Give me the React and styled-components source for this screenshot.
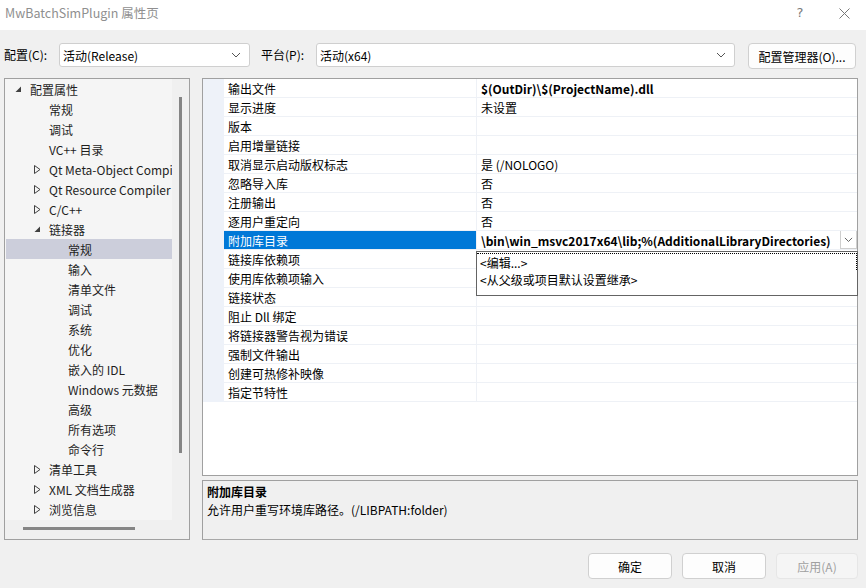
import styled, { createGlobalStyle } from 'styled-components';

const GlobalStyle = createGlobalStyle`
  html, body {
    margin: 0;
    padding: 0;
    background: #f0f0f0;
  }
  body {
    font-family: "Noto Sans CJK SC", "Noto Sans", sans-serif;
    font-size: 12px;
    color: #000;
  }
  * {
    box-sizing: border-box;
  }
`;

const Window = styled.div`
  width: 866px;
  height: 588px;
  display: flex;
  flex-direction: column;
  background: #f0f0f0;
  overflow: hidden;
`;

const TitleBar = styled.div`
  height: 30px;
  background: #fff;
  display: flex;
  align-items: flex-start;
  padding: 4px 0 0 5px;
  color: #8f8f8f;
  font-size: 12.5px;
  line-height: 18px;
`;

const TitleText = styled.div`
  flex: 1;
`;

const TitleButton = styled.div`
  width: 44px;
  height: 18px;
  display: flex;
  align-items: center;
  justify-content: center;
  color: #7a7a7a;
  font-family: "DejaVu Sans", sans-serif;
  font-size: 13px;
`;

const Toolbar = styled.div`
  display: flex;
  align-items: flex-start;
  padding: 13px 10px 0 4px;
  height: 39px;
`;

const Label = styled.div`
  height: 24px;
  line-height: 24px;
  width: ${(p) => p.$w}px;
  white-space: nowrap;
`;

const Combo = styled.div`
  width: ${(p) => p.$w}px;
  height: 24px;
  background: #fff;
  border: 1px solid #cfcfcf;
  border-radius: 3px;
  display: flex;
  align-items: center;
  padding: 0 8px 0 3px;
  margin-right: ${(p) => p.$mr}px;
`;

const ComboText = styled.div`
  flex: 1;
`;

const Button = styled.div`
  width: ${(p) => p.$w}px;
  height: 26px;
  background: ${(p) => (p.$disabled ? '#f5f5f5' : '#fdfdfd')};
  border: 1px solid ${(p) => (p.$disabled ? '#e6e6e6' : '#d0d0d0')};
  border-radius: 4px;
  display: flex;
  align-items: center;
  justify-content: center;
  color: ${(p) => (p.$disabled ? '#a0a0a0' : '#000')};
`;

const Main = styled.div`
  display: flex;
  gap: 12px;
  padding-left: 4px;
  margin-top: 9px;
  height: 462px;
`;

const TreePanel = styled.div`
  width: 186px;
  border: 1px solid #a0a0a0;
  display: grid;
  grid-template-columns: 167px 17px;
  grid-template-rows: 441px 1fr;
  background: #f0f0f0;
`;

const TreeList = styled.div`
  background: #f5f5f5;
  padding: 0 0 0 1px;
  overflow: hidden;
`;

const TreeRow = styled.div`
  height: 20px;
  display: flex;
  align-items: center;
  padding-left: ${(p) => 5 + p.$level * 19}px;
  background: ${(p) => (p.$selected ? '#cccedb' : 'transparent')};
  white-space: nowrap;
  color: #1e1e1e;
`;

const Arrow = styled.span`
  width: 19px;
  flex: none;
  display: flex;
  align-items: center;
`;

const VScroll = styled.div`
  display: flex;
  justify-content: center;
  padding: 18px 0 0 0;
`;

const VThumb = styled.div`
  width: 3px;
  height: 356px;
  background: #858585;
  margin-left: -1px;
`;

const HScroll = styled.div`
  padding: 7px 0 0 18px;
`;

const HThumb = styled.div`
  width: 112px;
  height: 3px;
  background: #858585;
`;

const Corner = styled.div``;

const RightColumn = styled.div`
  width: 656px;
  display: flex;
  flex-direction: column;
  gap: 4px;
`;

const Grid = styled.div`
  position: relative;
  height: 398px;
  border: 1px solid #a0a0a0;
  background: #fff;
  display: grid;
  grid-template-columns: 21px 252px 1fr;
  grid-auto-rows: 19px;
  align-content: start;
`;

const Gutter = styled.div`
  background: #eef2f9;
  border-bottom: 1px solid #eef2f9;
`;

const NameCell = styled.div`
  padding-left: 4px;
  display: flex;
  align-items: center;
  border-bottom: 1px solid #eef1f6;
  background: ${(p) => (p.$selected ? '#0078d7' : '#fff')};
  color: ${(p) => (p.$selected ? '#fff' : '#000')};
  white-space: nowrap;
`;

const ValueCell = styled.div`
  padding-left: 4px;
  display: flex;
  align-items: center;
  border-bottom: 1px solid #eef1f6;
  border-left: 1px solid #eef1f6;
  font-weight: ${(p) => (p.$bold ? 700 : 400)};
  white-space: nowrap;
  overflow: hidden;
`;

const ValueText = styled.div`
  flex: 1;
`;

const DropButton = styled.div`
  width: 17px;
  height: 18px;
  border: 1px solid #cfcfcf;
  border-top: none;
  background: #fff;
  display: flex;
  align-items: center;
  justify-content: center;
  flex: none;
`;

const Popup = styled.div`
  position: absolute;
  left: 273px;
  top: 172px;
  width: 382px;
  height: 45px;
  background: #fff;
  border: 1px solid #646464;
  padding-top: 1px;
`;

const PopupItem = styled.div`
  height: 17px;
  line-height: 17px;
  padding-left: 3px;
  border-top: 1px dotted ${(p) => (p.$focus ? '#000' : 'transparent')};
  border-right: 1px dotted ${(p) => (p.$focus ? '#000' : 'transparent')};
`;

const Description = styled.div`
  height: 60px;
  border: 1px solid #a0a0a0;
  border-bottom-color: #a8a8a8;
  background: #f0f0f0;
  padding: 2px 0 0 4px;
  line-height: 18px;
`;

const DescTitle = styled.div`
  font-weight: 700;
`;

const Footer = styled.div`
  display: flex;
  justify-content: flex-end;
  gap: 10px;
  padding-right: 8px;
  margin-top: 13px;
`;

const Chevron = ({ size = 10 }) => (
  <svg width={size} height={size * 0.6} viewBox="0 0 10 6">
    <path d="M1 1 L5 5 L9 1" fill="none" stroke="#555" strokeWidth="1" />
  </svg>
);

const OpenArrow = () => (
  <svg width="7" height="7" viewBox="0 0 7 7" style={{ marginLeft: 4 }}>
    <path d="M6 0.5 L6 6 L0.5 6 Z" fill="#404040" />
  </svg>
);

const ClosedArrow = () => (
  <svg width="7" height="9" viewBox="0 0 7 9" style={{ marginLeft: 4 }}>
    <path d="M0.5 0.5 L6 4.5 L0.5 8.5 Z" fill="none" stroke="#404040" strokeWidth="1" />
  </svg>
);

const treeItems = [
  { level: 0, text: '配置属性', arrow: 'open' },
  { level: 1, text: '常规' },
  { level: 1, text: '调试' },
  { level: 1, text: 'VC++ 目录' },
  { level: 1, text: 'Qt Meta-Object Compiler', arrow: 'closed' },
  { level: 1, text: 'Qt Resource Compiler', arrow: 'closed' },
  { level: 1, text: 'C/C++', arrow: 'closed' },
  { level: 1, text: '链接器', arrow: 'open' },
  { level: 2, text: '常规', selected: true },
  { level: 2, text: '输入' },
  { level: 2, text: '清单文件' },
  { level: 2, text: '调试' },
  { level: 2, text: '系统' },
  { level: 2, text: '优化' },
  { level: 2, text: '嵌入的 IDL' },
  { level: 2, text: 'Windows 元数据' },
  { level: 2, text: '高级' },
  { level: 2, text: '所有选项' },
  { level: 2, text: '命令行' },
  { level: 1, text: '清单工具', arrow: 'closed' },
  { level: 1, text: 'XML 文档生成器', arrow: 'closed' },
  { level: 1, text: '浏览信息', arrow: 'closed' },
];

const properties = [
  { name: '输出文件', value: '$(OutDir)\\$(ProjectName).dll', bold: true },
  { name: '显示进度', value: '未设置' },
  { name: '版本', value: '' },
  { name: '启用增量链接', value: '' },
  { name: '取消显示启动版权标志', value: '是 (/NOLOGO)' },
  { name: '忽略导入库', value: '否' },
  { name: '注册输出', value: '否' },
  { name: '逐用户重定向', value: '否' },
  { name: '附加库目录', value: '\\bin\\win_msvc2017x64\\lib;%(AdditionalLibraryDirectories)', bold: true, selected: true },
  { name: '链接库依赖项', value: '' },
  { name: '使用库依赖项输入', value: '' },
  { name: '链接状态', value: '' },
  { name: '阻止 Dll 绑定', value: '' },
  { name: '将链接器警告视为错误', value: '' },
  { name: '强制文件输出', value: '' },
  { name: '创建可热修补映像', value: '' },
  { name: '指定节特性', value: '' },
];

export default function App() {
  return (
    <Window>
      <GlobalStyle />
      <TitleBar>
        <TitleText>MwBatchSimPlugin 属性页</TitleText>
        <TitleButton>?</TitleButton>
        <TitleButton>
          <svg width="11" height="11" viewBox="0 0 11 11">
            <path d="M0.5 0.5 L10.5 10.5 M10.5 0.5 L0.5 10.5" stroke="#777" strokeWidth="1" />
          </svg>
        </TitleButton>
      </TitleBar>

      <Toolbar>
        <Label $w={55}>配置(C):</Label>
        <Combo $w={191} $mr={11}>
          <ComboText>活动(Release)</ComboText>
          <Chevron />
        </Combo>
        <Label $w={55}>平台(P):</Label>
        <Combo $w={419} $mr={13}>
          <ComboText>活动(x64)</ComboText>
          <Chevron />
        </Combo>
        <Button $w={108}>配置管理器(O)...</Button>
      </Toolbar>

      <Main>
        <TreePanel>
          <TreeList>
            {treeItems.map((item, i) => (
              <TreeRow key={i} $level={item.level} $selected={item.selected}>
                <Arrow>
                  {item.arrow === 'open' && <OpenArrow />}
                  {item.arrow === 'closed' && <ClosedArrow />}
                </Arrow>
                {item.text}
              </TreeRow>
            ))}
          </TreeList>
          <VScroll>
            <VThumb />
          </VScroll>
          <HScroll>
            <HThumb />
          </HScroll>
          <Corner />
        </TreePanel>

        <RightColumn>
          <Grid>
            {properties.map((p) => (
              <Row key={p.name} prop={p} />
            ))}
            <Popup>
              <PopupItem $focus>&lt;编辑...&gt;</PopupItem>
              <PopupItem>&lt;从父级或项目默认设置继承&gt;</PopupItem>
            </Popup>
          </Grid>
          <Description>
            <DescTitle>附加库目录</DescTitle>
            <div>允许用户重写环境库路径。(/LIBPATH:folder)</div>
          </Description>
        </RightColumn>
      </Main>

      <Footer>
        <Button $w={84}>确定</Button>
        <Button $w={84}>取消</Button>
        <Button $w={82} $disabled>应用(A)</Button>
      </Footer>
    </Window>
  );
}

function Row({ prop }) {
  return (
    <>
      <Gutter />
      <NameCell $selected={prop.selected}>{prop.name}</NameCell>
      <ValueCell $bold={prop.bold}>
        <ValueText>{prop.value}</ValueText>
        {prop.selected && (
          <DropButton>
            <Chevron size={9} />
          </DropButton>
        )}
      </ValueCell>
    </>
  );
}
